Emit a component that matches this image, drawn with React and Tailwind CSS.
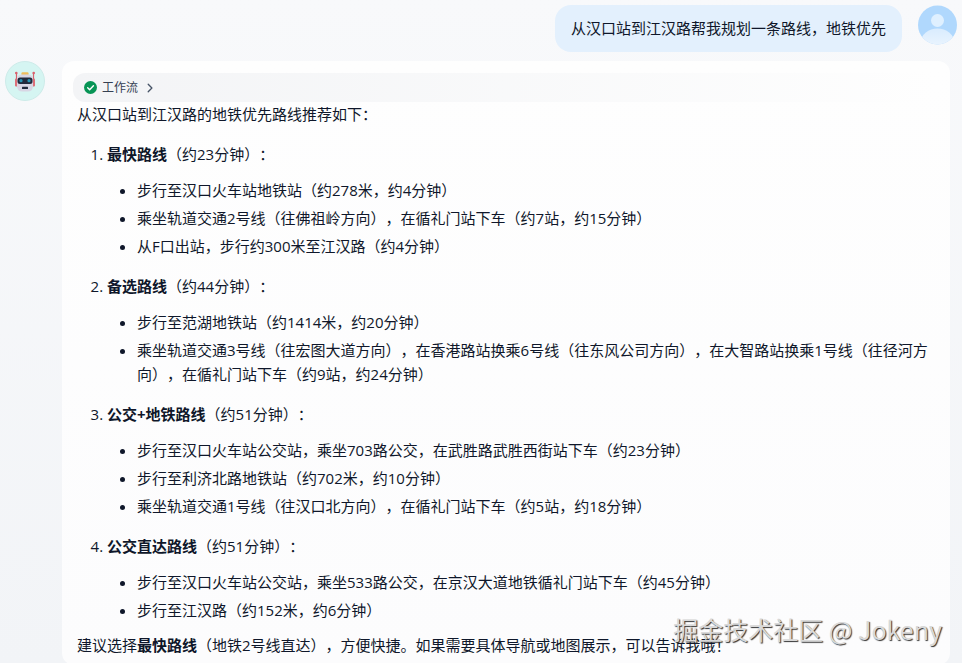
import React from "react";

const routes = [
  {
    name: "最快路线",
    time: "（约23分钟）：",
    steps: [
      "步行至汉口火车站地铁站（约278米，约4分钟）",
      "乘坐轨道交通2号线（往佛祖岭方向），在循礼门站下车（约7站，约15分钟）",
      "从F口出站，步行约300米至江汉路（约4分钟）",
    ],
  },
  {
    name: "备选路线",
    time: "（约44分钟）：",
    steps: [
      "步行至范湖地铁站（约1414米，约20分钟）",
      "乘坐轨道交通3号线（往宏图大道方向），在香港路站换乘6号线（往东风公司方向），在大智路站换乘1号线（往径河方向），在循礼门站下车（约9站，约24分钟）",
    ],
  },
  {
    name: "公交+地铁路线",
    time: "（约51分钟）：",
    steps: [
      "步行至汉口火车站公交站，乘坐703路公交，在武胜路武胜西街站下车（约23分钟）",
      "步行至利济北路地铁站（约702米，约10分钟）",
      "乘坐轨道交通1号线（往汉口北方向），在循礼门站下车（约5站，约18分钟）",
    ],
  },
  {
    name: "公交直达路线",
    time: "（约51分钟）：",
    steps: [
      "步行至汉口火车站公交站，乘坐533路公交，在京汉大道地铁循礼门站下车（约45分钟）",
      "步行至江汉路（约152米，约6分钟）",
    ],
  },
];

function UserAvatar() {
  return (
    <svg viewBox="0 0 40 40" className="size-10 shrink-0" role="img" aria-label="用户">
      <defs>
        <clipPath id="user-clip">
          <circle cx="20.5" cy="20" r="19.5" />
        </clipPath>
        <linearGradient id="user-body" x1="0" y1="0" x2="0" y2="1">
          <stop offset="0" stopColor="#d9ecfe" />
          <stop offset="1" stopColor="#f3f8fe" />
        </linearGradient>
      </defs>
      <g clipPath="url(#user-clip)">
        <rect width="40" height="40" fill="#b0d8fd" />
        <circle cx="20.500" cy="15.500" r="6.500" fill="#dff0ff" />
        <ellipse cx="20.500" cy="37" rx="16.500" ry="13.500" fill="url(#user-body)" />
      </g>
    </svg>
  );
}

function BotAvatar() {
  return (
    <svg viewBox="0 0 40 40" className="size-10 shrink-0" role="img" aria-label="助手">
      <circle cx="20" cy="20" r="19.5" fill="#d5f5f2" stroke="#cdebe9" />
      <path d="M11.500 12v12M28.500 12v12" stroke="#d9606d" strokeWidth="1.200" />
      <circle cx="11.300" cy="12" r="1.300" fill="#d9606d" />
      <circle cx="28.700" cy="12" r="1.300" fill="#d9606d" />
      <rect x="10" y="17.500" width="3" height="8" rx="1" fill="#dc6f79" />
      <rect x="27" y="17.500" width="3" height="8" rx="1" fill="#dc6f79" />
      <rect x="16.500" y="11.300" width="7" height="4" rx="1" fill="#f0bd5c" />
      <path d="M12 18.500q0-5 5.500-5h5q5.500 0 5.500 5v6.500q0 5.500-5.500 5.500h-5q-5.500 0-5.500-5.500z" fill="#d8d6e4" />
      <rect x="12.500" y="16.500" width="15" height="6.500" rx="2.500" fill="#222a3c" />
      <circle cx="16" cy="19.700" r="1.600" fill="#2794b4" />
      <circle cx="24" cy="19.700" r="1.600" fill="#2794b4" />
      <rect x="17" y="25.800" width="6" height="2.200" rx="0.500" fill="#222a3c" />
    </svg>
  );
}

export default function App() {
  return (
    <main
      lang="zh-CN"
      className="relative min-h-screen bg-linear-to-b from-[#f8f9fb] to-[#f2f4f7] px-[5px] pt-[5px] font-['Open_Sans','Noto_Sans_CJK_SC',sans-serif] text-[15px] leading-6 text-[#0f172a] [text-spacing-trim:space-all]"
    >
      <section className="flex items-start justify-end gap-[15px]">
        <p className="rounded-2xl bg-[#e3f0fd] px-4 pt-[11px] pb-3">
          从汉口站到江汉路帮我规划一条路线，地铁优先
        </p>
        <UserAvatar />
      </section>

      <section className="mt-[9px] flex items-start gap-[17px] pr-[7px]">
        <BotAvatar />
        <article className="min-w-0 flex-1 rounded-xl bg-linear-to-b from-[#fefefe] to-[#fcfcfd] px-[11px] pt-3 pb-2">
          <button
            type="button"
            className="flex h-[29px] w-full items-center rounded-xl bg-linear-to-r from-[#f3f4f6] to-[#fefefe] pl-[11px] text-xs text-[#354052]"
          >
            <svg viewBox="0 0 12 12" className="mr-[5px] size-[13px]" aria-hidden="true">
              <circle cx="6" cy="6" r="6" fill="#079455" />
              <path d="M3.400 6.200l1.800 1.800 3.500-3.700" fill="none" stroke="#fff" strokeWidth="1.300" strokeLinecap="round" strokeLinejoin="round" />
            </svg>
            工作流
            <svg viewBox="0 0 12 12" className="ml-[6px] size-3" aria-hidden="true">
              <path d="M4.200 2.200L7.900 6 4.200 9.800" fill="none" stroke="#475467" strokeWidth="1.300" strokeLinecap="round" strokeLinejoin="round" />
            </svg>
          </button>

          <div className="px-1">
            <p>从汉口站到江汉路的地铁优先路线推荐如下：</p>
            <ol className="mt-4 mb-[11px] flex list-decimal flex-col gap-4 pl-[30px]">
              {routes.map((route) => (
                <li key={route.name}>
                  <strong className="font-bold">{route.name}</strong>
                  {route.time}
                  <ul className="mt-3 flex list-disc flex-col gap-1 pl-[30px]">
                    {route.steps.map((step) => (
                      <li key={step}>{step}</li>
                    ))}
                  </ul>
                </li>
              ))}
            </ol>
            <p>
              建议选择<strong className="font-bold">最快路线</strong>
              （地铁2号线直达），方便快捷。如果需要具体导航或地图展示，可以告诉我哦！
            </p>
          </div>
        </article>
      </section>

      <p className="pointer-events-none absolute right-5 bottom-[18px] font-['Noto_Sans_CJK_SC',sans-serif] text-[25px] leading-9 text-[#d9d9d9] [text-shadow:1px_1px_1px_#333]">
        掘金技术社区 @ Jokeny
      </p>
    </main>
  );
}
